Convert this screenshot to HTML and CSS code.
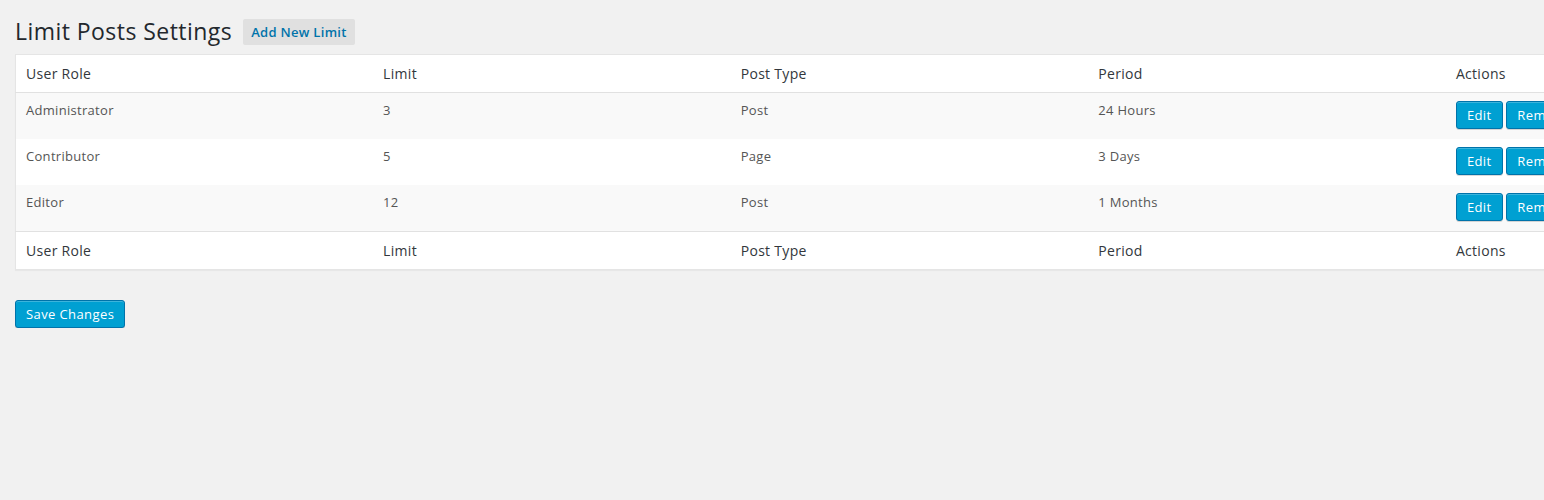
FILE: index.html
```html
<!DOCTYPE html>
<html lang="en">
<head>
    <meta charset="UTF-8">
    <title>Limit Posts Settings</title>
    <link rel="stylesheet" href="styles.css">
</head>
<body>
    <div class="wrap">
        <div class="page-head">
            <h1>Limit Posts Settings</h1>
            <a href="#" class="page-title-action">Add New Limit</a>
        </div>

        <table class="limits-table">
            <thead>
                <tr>
                    <th>User Role</th>
                    <th>Limit</th>
                    <th>Post Type</th>
                    <th>Period</th>
                    <th>Actions</th>
                </tr>
            </thead>
            <tbody>
                <tr class="alt">
                    <td>Administrator</td>
                    <td>3</td>
                    <td>Post</td>
                    <td>24 Hours</td>
                    <td class="actions"><button class="button-primary">Edit</button> <button class="button-primary">Remove</button></td>
                </tr>
                <tr>
                    <td>Contributor</td>
                    <td>5</td>
                    <td>Page</td>
                    <td>3 Days</td>
                    <td class="actions"><button class="button-primary">Edit</button> <button class="button-primary">Remove</button></td>
                </tr>
                <tr class="alt">
                    <td>Editor</td>
                    <td>12</td>
                    <td>Post</td>
                    <td>1 Months</td>
                    <td class="actions"><button class="button-primary">Edit</button> <button class="button-primary">Remove</button></td>
                </tr>
            </tbody>
            <tfoot>
                <tr>
                    <th>User Role</th>
                    <th>Limit</th>
                    <th>Post Type</th>
                    <th>Period</th>
                    <th>Actions</th>
                </tr>
            </tfoot>
        </table>

        <p class="submit">
            <button class="button-primary">Save Changes</button>
        </p>
    </div>
</body>
</html>
```

FILE: styles.css
```css
html, body {
    overflow: hidden;
}
body {
    margin: 0;
    background-color: #f1f1f1;
    color: #444;
    font-family: 'Open Sans', sans-serif;
    font-size: 13px;
    letter-spacing: 0.3px;
}
.wrap {
    padding: 0 0 0 15px;
}
.page-head {
    display: flex;
    align-items: center;
    gap: 11px;
    padding-top: 17px;
    margin-bottom: 8px;
}
h1 {
    margin: 0;
    font-size: 23px;
    font-weight: 400;
    line-height: 29px;
    letter-spacing: 0.45px;
    color: #23282d;
}
.page-title-action {
    display: inline-block;
    padding: 4px 8px;
    line-height: 18px;
    font-size: 13px;
    font-weight: 600;
    color: #0073aa;
    background-color: #e0e0e0;
    border-radius: 2px;
    text-decoration: none;
}
.limits-table {
    width: 1789px;
    table-layout: fixed;
    border-collapse: collapse;
    background-color: #fff;
    border: 1px solid #e5e5e5;
    box-shadow: 0 1px 1px rgba(0, 0, 0, 0.04);
}
.limits-table th {
    text-align: left;
    font-weight: 400;
    font-size: 14px;
    line-height: 21px;
    color: #32373c;
    padding: 8px 10px;
}
.limits-table thead th {
    border-bottom: 1px solid #e1e1e1;
}
.limits-table tfoot th {
    border-top: 1px solid #e1e1e1;
}
.limits-table td {
    vertical-align: top;
    padding: 8px 10px;
    line-height: 19px;
    color: #555;
}
.limits-table tr.alt td {
    background-color: #f9f9f9;
}
.actions {
    white-space: nowrap;
}
.actions .button-primary {
    vertical-align: top;
    margin-bottom: 2px;
}
.button-primary {
    height: 28px;
    padding: 0 10px 1px;
    font-family: 'Open Sans', sans-serif;
    font-size: 13px;
    line-height: 26px;
    letter-spacing: 0.4px;
    color: #fff;
    background-color: #00a0d2;
    border: 1px solid #0073aa;
    border-radius: 3px;
    box-shadow: inset 0 1px 0 rgba(120, 200, 230, 0.5), 0 1px 0 rgba(0, 0, 0, 0.15);
    cursor: pointer;
}
.submit {
    margin: 30px 0 0;
    padding: 0;
}
```
